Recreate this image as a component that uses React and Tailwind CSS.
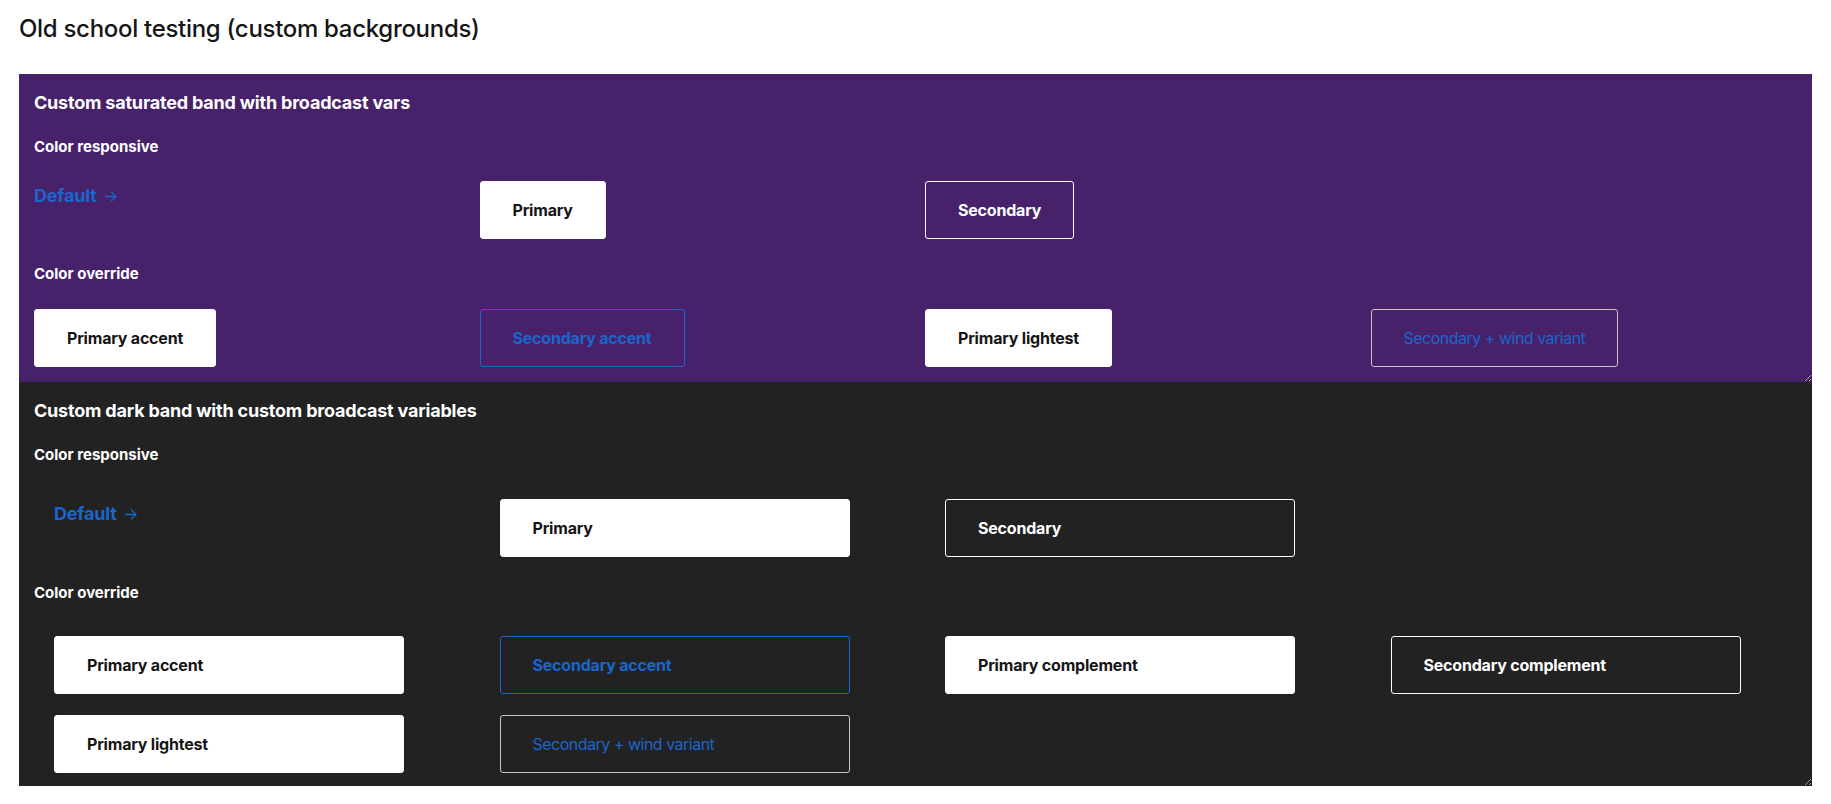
import React from "react";

const variants = {
  primary: "bg-white border-white text-[#151515] font-bold tracking-[-0.2px]",
  secondary: "bg-transparent border-white text-white font-bold tracking-[-0.2px]",
  accent: "bg-transparent border-[#1a66cc] text-[#1a66cc] font-bold tracking-[-0.2px]",
  wind: "bg-transparent border-[#c7c7c7] text-[#1a66cc] font-normal tracking-[-0.5px]",
};

function Btn({ children, variant = "primary", wide }) {
  const size = wide ? "w-[350px] text-left" : "text-center";
  return (
    <button
      className={`border rounded-[3px] py-4 px-8 text-base leading-6 whitespace-nowrap ${size} ${variants[variant]}`}
    >
      {children}
    </button>
  );
}

function DefaultLink() {
  return (
    <a href="#" className="inline-flex items-center pt-[2px] text-[18px] leading-[26px] font-bold tracking-[-0.2px] text-[#1a66cc]">
      Default
      <svg width="13" height="13" viewBox="0 0 12 12" className="ml-[7px] mt-[1px]" fill="none" stroke="currentColor" strokeWidth="1.2">
        <path d="M1 6h10M6.5 1.5 11 6l-4.5 4.5" />
      </svg>
    </a>
  );
}

export default function App() {
  return (
    <div className="min-h-screen bg-white px-[19px] pt-[14px] text-[#151515]" style={{ fontFamily: "Inter, 'Noto Sans', sans-serif" }}>
      <h1 className="text-[24px] leading-[30px] font-medium mb-[30px] tracking-[-0.3px]">
        Old school testing (custom backgrounds)
      </h1>

      {/* saturated band */}
      <section className="bg-[#47226a] p-[15px] text-white resize overflow-auto">
        <h2 className="text-[18px] leading-[27px] font-bold tracking-[-0.2px]">Custom saturated band with broadcast vars</h2>
        <h3 className="mt-5 text-[15px] leading-[22px] font-bold">Color responsive</h3>
        <div className="mt-[23px] grid grid-cols-4 gap-x-[19px] items-start">
          <div><DefaultLink /></div>
          <div><Btn>Primary</Btn></div>
          <div><Btn variant="secondary">Secondary</Btn></div>
          <div />
        </div>
        <h3 className="mt-6 text-[15px] leading-[22px] font-bold">Color override</h3>
        <div className="mt-6 grid grid-cols-4 gap-x-[19px] items-start">
          <div><Btn>Primary accent</Btn></div>
          <div><Btn variant="accent">Secondary accent</Btn></div>
          <div><Btn>Primary lightest</Btn></div>
          <div><Btn variant="wind">Secondary + wind variant</Btn></div>
        </div>
      </section>

      {/* dark band */}
      <section className="bg-[#222222] px-[15px] pt-[15px] pb-[13px] text-white resize overflow-auto">
        <h2 className="text-[18px] leading-[27px] font-bold tracking-[-0.2px]">Custom dark band with custom broadcast variables</h2>
        <h3 className="mt-5 text-[15px] leading-[22px] font-bold">Color responsive</h3>
        <div className="mt-[33px] grid grid-cols-4 gap-x-[19px] items-start">
          <div className="pl-5"><DefaultLink /></div>
          <div className="pl-5"><Btn wide>Primary</Btn></div>
          <div className="pl-5"><Btn wide variant="secondary">Secondary</Btn></div>
          <div />
        </div>
        <h3 className="mt-[25px] text-[15px] leading-[22px] font-bold">Color override</h3>
        <div className="mt-8 grid grid-cols-4 gap-x-[19px] gap-y-[21px] items-start">
          <div className="pl-5"><Btn wide>Primary accent</Btn></div>
          <div className="pl-5"><Btn wide variant="accent">Secondary accent</Btn></div>
          <div className="pl-5"><Btn wide>Primary complement</Btn></div>
          <div className="pl-5"><Btn wide variant="secondary">Secondary complement</Btn></div>
          <div className="pl-5"><Btn wide>Primary lightest</Btn></div>
          <div className="pl-5"><Btn wide variant="wind">Secondary + wind variant</Btn></div>
        </div>
      </section>
    </div>
  );
}
